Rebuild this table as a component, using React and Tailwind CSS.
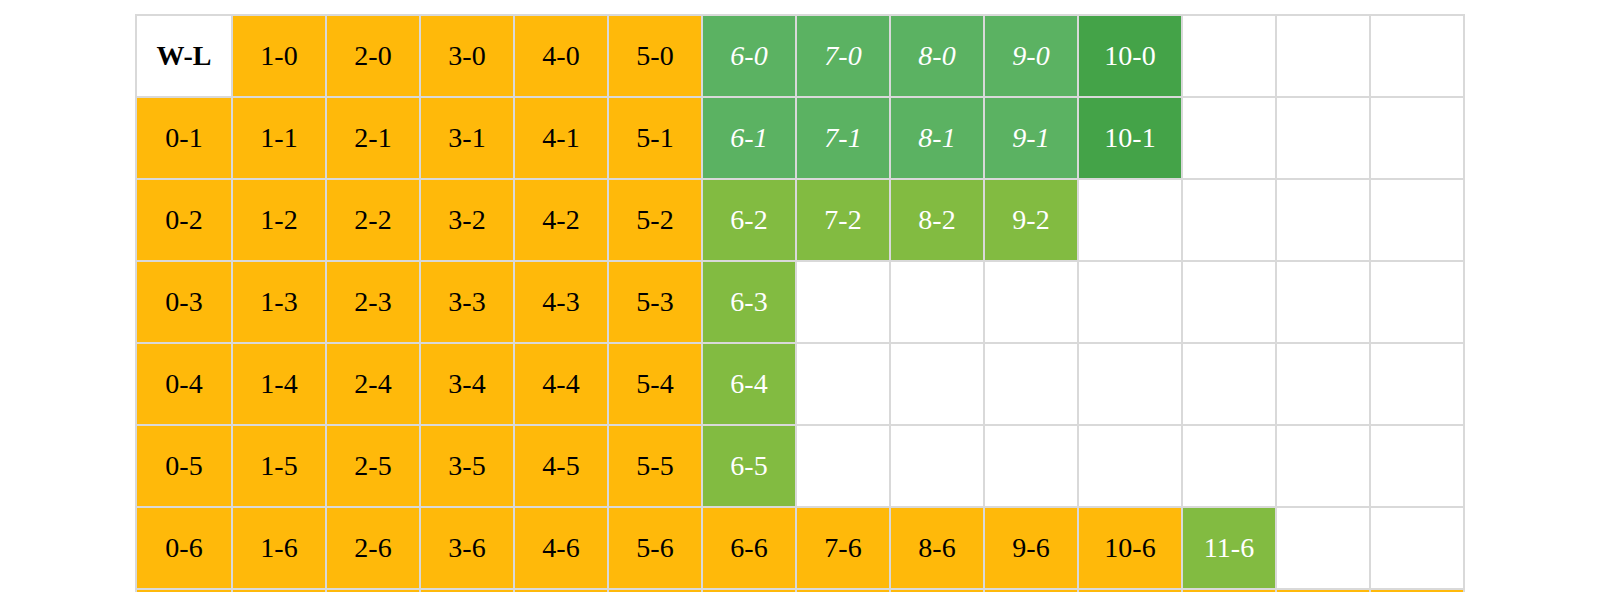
const ORANGE = 'bg-[#ffb90a] text-black';
const GREEN = 'bg-[#5bb262] text-white italic';
const DARK = 'bg-[#44a348] text-white';
const LIME = 'bg-[#82bb41] text-white';
const EMPTY = 'bg-white';

// Each row: array of [label, style] for the 14 columns
const buildRows = () => {
    const rows = [];
    // Row 0: header row with W-L
    const r0 = [['W-L', 'bg-white text-black font-bold']];
    for (let w = 1; w <= 5; w++) r0.push([`${w}-0`, ORANGE]);
    for (let w = 6; w <= 9; w++) r0.push([`${w}-0`, GREEN]);
    r0.push(['10-0', DARK]);
    for (let i = 0; i < 3; i++) r0.push(['', EMPTY]);
    rows.push(r0);

    const r1 = [];
    for (let w = 0; w <= 5; w++) r1.push([`${w}-1`, ORANGE]);
    for (let w = 6; w <= 9; w++) r1.push([`${w}-1`, GREEN]);
    r1.push(['10-1', DARK]);
    for (let i = 0; i < 3; i++) r1.push(['', EMPTY]);
    rows.push(r1);

    const r2 = [];
    for (let w = 0; w <= 5; w++) r2.push([`${w}-2`, ORANGE]);
    for (let w = 6; w <= 9; w++) r2.push([`${w}-2`, LIME]);
    for (let i = 0; i < 4; i++) r2.push(['', EMPTY]);
    rows.push(r2);

    [3, 4, 5].forEach(l => {
        const r = [];
        for (let w = 0; w <= 5; w++) r.push([`${w}-${l}`, ORANGE]);
        r.push([`6-${l}`, LIME]);
        for (let i = 0; i < 7; i++) r.push(['', EMPTY]);
        rows.push(r);
    });

    const r6 = [];
    for (let w = 0; w <= 10; w++) r6.push([`${w}-6`, ORANGE]);
    r6.push(['11-6', LIME]);
    for (let i = 0; i < 2; i++) r6.push(['', EMPTY]);
    rows.push(r6);

    // next row only peeks in at the bottom edge
    const r7 = [];
    for (let w = 0; w <= 13; w++) r7.push(['', ORANGE]);
    rows.push(r7);

    return rows;
};

const rows = buildRows();

export default function App() {
    return (
        <div className="bg-white min-h-screen pt-[14px]" style={{ fontFamily: '"Liberation Serif", "Times New Roman", serif' }}>
            <div className="mx-auto w-[1330px] bg-[#d9d9d9] p-[2px] grid grid-cols-[94px_repeat(9,92px)_102px_repeat(3,92px)] auto-rows-[80px] gap-[2px]">
                {rows.flatMap((row, ri) =>
                    row.map(([label, style], ci) => (
                        <div
                            key={`${ri}-${ci}`}
                            className={`flex items-center justify-center text-[28px] leading-none ${style}`}
                        >
                            {label}
                        </div>
                    ))
                )}
            </div>
        </div>
    );
}
